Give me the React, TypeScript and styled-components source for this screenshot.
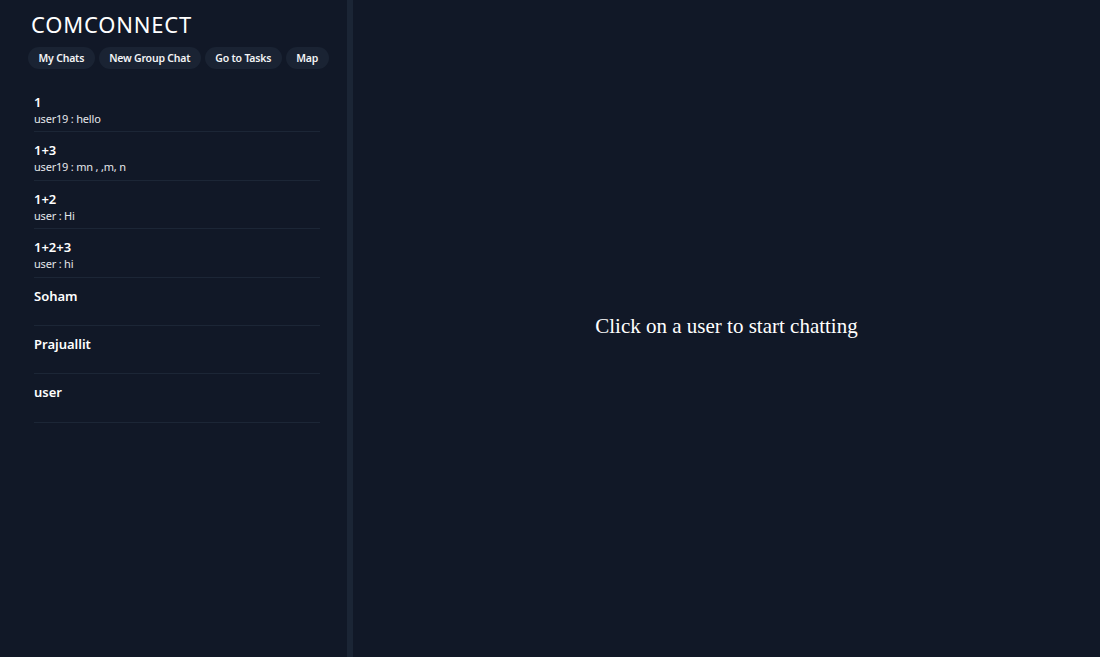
import React from 'react';
import styled, { createGlobalStyle } from 'styled-components';

const GlobalStyle = createGlobalStyle`
  html, body {
    margin: 0;
    padding: 0;
    background: #111827;
  }
  #root {
    height: 100vh;
  }
`;

type Chat = { name: string; last?: string };

const chats: Chat[] = [
    { name: '1', last: 'user19 : hello' },
    { name: '1+3', last: 'user19 : mn , ,m, n' },
    { name: '1+2', last: 'user : Hi' },
    { name: '1+2+3', last: 'user : hi' },
    { name: 'Soham' },
    { name: 'Prajuallit' },
    { name: 'user' },
];

const navItems = ['My Chats', 'New Group Chat', 'Go to Tasks', 'Map'];

const App: React.FC = () => {
    return (
        <>
            <GlobalStyle />
            <Layout>
                <Sidebar>
                    <Brand>COMCONNECT</Brand>
                    <NavRow>
                        {navItems.map(item => (
                            <NavBtn key={item}>{item}</NavBtn>
                        ))}
                    </NavRow>
                    <ChatList>
                        {chats.map(chat => (
                            <ChatItem key={chat.name}>
                                <ChatName>{chat.name}</ChatName>
                                <LastMsg>{chat.last ?? ''}</LastMsg>
                            </ChatItem>
                        ))}
                    </ChatList>
                </Sidebar>
                <Main>
                    <Placeholder>Click on a user to start chatting</Placeholder>
                </Main>
            </Layout>
        </>
    );
};

const Layout = styled.div`
  display: flex;
  height: 100vh;
  background: #111827;
  color: #f3f4f6;
`;

/* 左侧栏 */
const Sidebar = styled.aside`
  width: 353px;
  flex-shrink: 0;
  border-right: 6px solid #1b2535;
  padding: 11px 0 0 28px;
  box-sizing: border-box;
  font-family: "Noto Sans", "Open Sans", sans-serif;
`;

const Brand = styled.h1`
  margin: 0 0 0 3px;
  font-family: "Noto Sans", sans-serif;
  font-size: 22px;
  font-weight: 400;
  letter-spacing: 0.8px;
  line-height: 26px;
  color: #ffffff;
`;

const NavRow = styled.div`
  display: flex;
  gap: 4px;
  margin-top: 10px;
`;

const NavBtn = styled.button`
  height: 22px;
  padding: 0 10.5px;
  border: none;
  border-radius: 11px;
  background: #1a2333;
  color: #f3f4f6;
  font-family: "Noto Sans", sans-serif;
  font-size: 10.5px;
  font-weight: 600;
  letter-spacing: -0.2px;
  cursor: pointer;
`;

const ChatList = styled.div`
  width: 286px;
  margin: 15px 0 0 6px;
`;

const ChatItem = styled.div`
  height: 48.4px;
  box-sizing: border-box;
  padding-top: 9px;
  border-bottom: 1px solid #1c2636;
  cursor: pointer;
`;

const ChatName = styled.div`
  font-size: 13px;
  font-weight: 600;
  line-height: 18px;
  color: #ffffff;
`;

const LastMsg = styled.div`
  font-size: 11px;
  line-height: 15px;
  letter-spacing: -0.2px;
  color: #e5e7eb;
`;

const Main = styled.main`
  flex: 1;
  display: flex;
  align-items: center;
  justify-content: center;
`;

const Placeholder = styled.div`
  font-family: "Liberation Serif", serif;
  font-size: 21px;
  margin-bottom: 4px;
  color: #ffffff;
`;

export default App;
